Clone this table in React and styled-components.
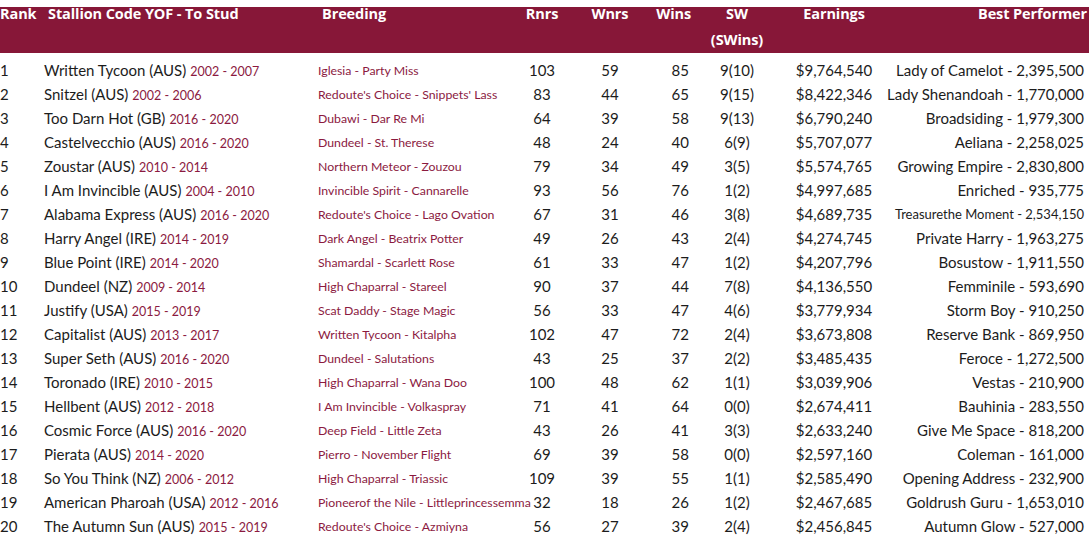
import React from 'react';
import styled, { createGlobalStyle } from 'styled-components';

const GlobalStyle = createGlobalStyle`
  html, body {
    margin: 0;
    padding: 0;
    background: #fff;
  }
  body {
    font-family: 'Lato', 'Open Sans', sans-serif;
    color: #1c1c1c;
  }
`;

const COLUMNS = '44px 274px 192px 64px 72px 54px 74px 120px minmax(0, 1fr)';

const Table = styled.div`
  width: 1089px;
  padding-top: 7px;
`;

const Head = styled.div`
  display: grid;
  grid-template-columns: ${COLUMNS};
  height: 46px;
  background: #871738;
  color: #fff;
  font-family: 'Open Sans', 'Lato', sans-serif;
  font-size: 14.5px;
  font-weight: 700;
  line-height: 14px;
  letter-spacing: -0.1px;
  box-sizing: border-box;
`;

const HeadCell = styled.div`
  display: flex;
  flex-direction: column;
  gap: 12px;
  align-items: ${({ align }) =>
    align === 'right' ? 'flex-end' : align === 'center' ? 'center' : 'flex-start'};
  padding-left: ${({ padLeft }) => padLeft || 0}px;
  padding-right: ${({ padRight }) => padRight || 0}px;
  white-space: nowrap;
`;

const Body = styled.div`
  padding-top: 5px;
`;

const Row = styled.div`
  display: grid;
  grid-template-columns: ${COLUMNS};
  height: 24px;
  align-items: center;
  font-size: 15px;
  white-space: nowrap;
`;

const Cell = styled.div`
  display: flex;
  justify-content: ${({ align }) =>
    align === 'right' ? 'flex-end' : align === 'center' ? 'center' : 'flex-start'};
  align-items: baseline;
  gap: 4px;
  min-width: 0;
  padding-right: ${({ padRight }) => padRight || 0}px;
`;

const Years = styled.span`
  color: #8b1a3f;
  font-size: 12.5px;
`;

const Breeding = styled(Cell)`
  color: #8b1a3f;
  font-size: 12.3px;
`;

const Performer = styled(Cell)`
  font-size: ${({ small }) => (small ? '13px' : '15px')};
`;

const rows = [
  ['Written Tycoon (AUS)', '2002 - 2007', 'Iglesia - Party Miss', 103, 59, 85, '9(10)', '$9,764,540', 'Lady of Camelot - 2,395,500'],
  ['Snitzel (AUS)', '2002 - 2006', "Redoute's Choice - Snippets' Lass", 83, 44, 65, '9(15)', '$8,422,346', 'Lady Shenandoah - 1,770,000'],
  ['Too Darn Hot (GB)', '2016 - 2020', 'Dubawi - Dar Re Mi', 64, 39, 58, '9(13)', '$6,790,240', 'Broadsiding - 1,979,300'],
  ['Castelvecchio (AUS)', '2016 - 2020', 'Dundeel - St. Therese', 48, 24, 40, '6(9)', '$5,707,077', 'Aeliana - 2,258,025'],
  ['Zoustar (AUS)', '2010 - 2014', 'Northern Meteor - Zouzou', 79, 34, 49, '3(5)', '$5,574,765', 'Growing Empire - 2,830,800'],
  ['I Am Invincible (AUS)', '2004 - 2010', 'Invincible Spirit - Cannarelle', 93, 56, 76, '1(2)', '$4,997,685', 'Enriched - 935,775'],
  ['Alabama Express (AUS)', '2016 - 2020', "Redoute's Choice - Lago Ovation", 67, 31, 46, '3(8)', '$4,689,735', 'Treasurethe Moment - 2,534,150', true],
  ['Harry Angel (IRE)', '2014 - 2019', 'Dark Angel - Beatrix Potter', 49, 26, 43, '2(4)', '$4,274,745', 'Private Harry - 1,963,275'],
  ['Blue Point (IRE)', '2014 - 2020', 'Shamardal - Scarlett Rose', 61, 33, 47, '1(2)', '$4,207,796', 'Bosustow - 1,911,550'],
  ['Dundeel (NZ)', '2009 - 2014', 'High Chaparral - Stareel', 90, 37, 44, '7(8)', '$4,136,550', 'Femminile - 593,690'],
  ['Justify (USA)', '2015 - 2019', 'Scat Daddy - Stage Magic', 56, 33, 47, '4(6)', '$3,779,934', 'Storm Boy - 910,250'],
  ['Capitalist (AUS)', '2013 - 2017', 'Written Tycoon - Kitalpha', 102, 47, 72, '2(4)', '$3,673,808', 'Reserve Bank - 869,950'],
  ['Super Seth (AUS)', '2016 - 2020', 'Dundeel - Salutations', 43, 25, 37, '2(2)', '$3,485,435', 'Feroce - 1,272,500'],
  ['Toronado (IRE)', '2010 - 2015', 'High Chaparral - Wana Doo', 100, 48, 62, '1(1)', '$3,039,906', 'Vestas - 210,900'],
  ['Hellbent (AUS)', '2012 - 2018', 'I Am Invincible - Volkaspray', 71, 41, 64, '0(0)', '$2,674,411', 'Bauhinia - 283,550'],
  ['Cosmic Force (AUS)', '2016 - 2020', 'Deep Field - Little Zeta', 43, 26, 41, '3(3)', '$2,633,240', 'Give Me Space - 818,200'],
  ['Pierata (AUS)', '2014 - 2020', 'Pierro - November Flight', 69, 39, 58, '0(0)', '$2,597,160', 'Coleman - 161,000'],
  ['So You Think (NZ)', '2006 - 2012', 'High Chaparral - Triassic', 109, 39, 55, '1(1)', '$2,585,490', 'Opening Address - 232,900'],
  ['American Pharoah (USA)', '2012 - 2016', 'Pioneerof the Nile - Littleprincessemma', 32, 18, 26, '1(2)', '$2,467,685', 'Goldrush Guru - 1,653,010'],
  ['The Autumn Sun (AUS)', '2015 - 2019', "Redoute's Choice - Azmiyna", 56, 27, 39, '2(4)', '$2,456,845', 'Autumn Glow - 527,000'],
];

export default function App() {
  return (
    <Table>
      <GlobalStyle />
      <Head>
        <HeadCell>Rank</HeadCell>
        <HeadCell padLeft={4}>Stallion Code YOF - To Stud</HeadCell>
        <HeadCell padLeft={4}>Breeding</HeadCell>
        <HeadCell align="center">Rnrs</HeadCell>
        <HeadCell align="center">Wnrs</HeadCell>
        <HeadCell align="right" padRight={9}>Wins</HeadCell>
        <HeadCell align="center">
          <span>SW</span>
          <span>(SWins)</span>
        </HeadCell>
        <HeadCell align="center">Earnings</HeadCell>
        <HeadCell align="right" padRight={2}>Best Performer</HeadCell>
      </Head>
      <Body>
        {rows.map((r, i) => (
          <Row key={r[0]}>
            <Cell>{i + 1}</Cell>
            <Cell>
              <span>{r[0]}</span>
              <Years>{r[1]}</Years>
            </Cell>
            <Breeding>{r[2]}</Breeding>
            <Cell align="center">{r[3]}</Cell>
            <Cell align="center">{r[4]}</Cell>
            <Cell align="right" padRight={11}>{r[5]}</Cell>
            <Cell align="center">{r[6]}</Cell>
            <Cell align="center">{r[7]}</Cell>
            <Performer align="right" padRight={5} small={r[9]}>{r[8]}</Performer>
          </Row>
        ))}
      </Body>
    </Table>
  );
}
